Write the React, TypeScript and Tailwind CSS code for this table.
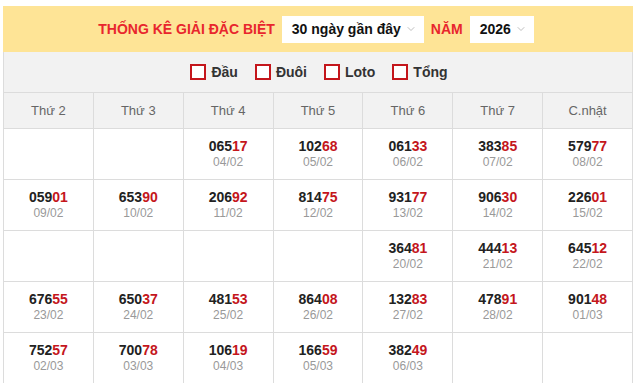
import { ChevronDown } from 'lucide-react'

const days = ['Thứ 2', 'Thứ 3', 'Thứ 4', 'Thứ 5', 'Thứ 6', 'Thứ 7', 'C.nhật']

type Cell = { n: string; d: string } | null

const rows: Cell[][] = [
  [null, null, { n: '06517', d: '04/02' }, { n: '10268', d: '05/02' }, { n: '06133', d: '06/02' }, { n: '38385', d: '07/02' }, { n: '57977', d: '08/02' }],
  [{ n: '05901', d: '09/02' }, { n: '65390', d: '10/02' }, { n: '20692', d: '11/02' }, { n: '81475', d: '12/02' }, { n: '93177', d: '13/02' }, { n: '90630', d: '14/02' }, { n: '22601', d: '15/02' }],
  [null, null, null, null, { n: '36481', d: '20/02' }, { n: '44413', d: '21/02' }, { n: '64512', d: '22/02' }],
  [{ n: '67655', d: '23/02' }, { n: '65037', d: '24/02' }, { n: '48153', d: '25/02' }, { n: '86408', d: '26/02' }, { n: '13283', d: '27/02' }, { n: '47891', d: '28/02' }, { n: '90148', d: '01/03' }],
  [{ n: '75257', d: '02/03' }, { n: '70078', d: '03/03' }, { n: '10619', d: '04/03' }, { n: '16659', d: '05/03' }, { n: '38249', d: '06/03' }, null, null],
]

function Select({ label, width }: { label: string; width: string }) {
  return (
    <div className={`flex items-center justify-between bg-white h-[27px] pl-[10px] pr-[7px] ${width}`}>
      <span className="text-[14px] font-bold text-[#111]">{label}</span>
      <ChevronDown className="w-[12px] h-[12px] text-[#aaa]" strokeWidth={1.5} />
    </div>
  )
}

export default function App() {
  return (
    <div className="pt-[6px] pl-[3px] w-[633px] font-['Liberation_Sans',Arial,sans-serif]">
      <div className="h-[46px] bg-[#fee496] flex items-center justify-center gap-[7px] pr-[4px]">
        <span className="text-[14px] font-bold text-[#e8262d]">THỐNG KÊ GIẢI ĐẶC BIỆT</span>
        <Select label="30 ngày gần đây" width="w-[142px]" />
        <span className="text-[14px] font-bold text-[#e8262d]">NĂM</span>
        <Select label="2026" width="w-[64px]" />
      </div>
      <div className="h-[40px] bg-[#f2f2f2] border-x border-[#dcdcdc] flex items-center justify-center gap-[17px] pl-[2px]">
        {['Đầu', 'Đuôi', 'Loto', 'Tổng'].map((t) => (
          <label key={t} className="flex items-center gap-[5px]">
            <span className="w-[16px] h-[16px] border-2 border-[#c4161c] bg-white" />
            <span className="text-[14px] font-bold text-[#333]">{t}</span>
          </label>
        ))}
      </div>
      <div className="grid grid-cols-7 border-l border-[#dcdcdc]">
        {days.map((d) => (
          <div key={d} className="h-[36px] bg-[#f2f2f2] border-r border-t border-[#dcdcdc] flex items-center justify-center text-[13px] text-[#666]">
            {d}
          </div>
        ))}
        {rows.flat().map((c, i) => (
          <div key={i} className="h-[51px] border-r border-t border-[#dcdcdc] flex flex-col items-center justify-center bg-white">
            {c && (
              <>
                <div className="text-[14px] font-bold leading-[16px] text-[#222]">
                  {c.n.slice(0, 3)}
                  <span className="text-[#c4161c]">{c.n.slice(3)}</span>
                </div>
                <div className="text-[12px] leading-[16px] text-[#999]">{c.d}</div>
              </>
            )}
          </div>
        ))}
      </div>
    </div>
  )
}
